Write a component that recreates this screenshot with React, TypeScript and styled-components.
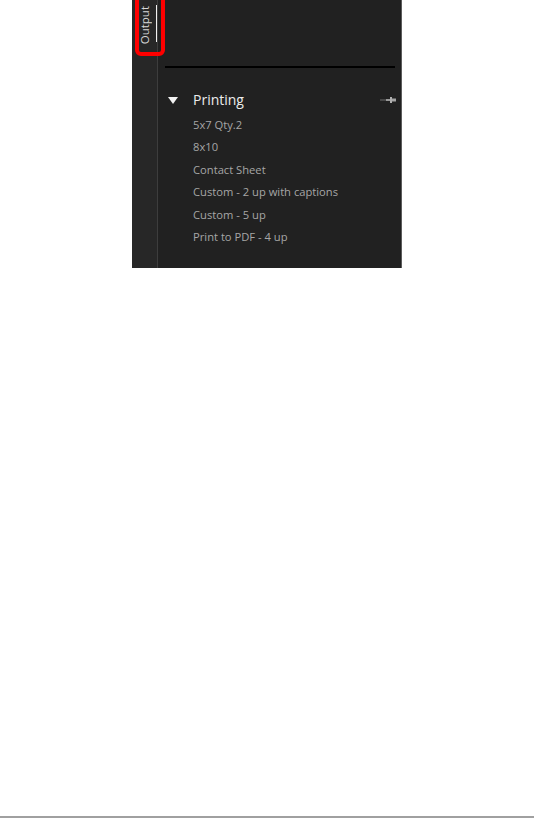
import styled, { createGlobalStyle } from 'styled-components';

const GlobalStyle = createGlobalStyle`
  html, body {
    margin: 0;
    padding: 0;
    background: #ffffff;
  }
`;

const Page = styled.div`
  height: 816px;
  border-bottom: 2px solid #a0a0a0;
  padding-left: 132px;
`;

const Panel = styled.div`
  position: relative;
  display: flex;
  width: 270px;
  height: 268px;
  background: #212121;
  border-right: 1px solid #5c5c5c;
  box-sizing: border-box;
`;

const TabStrip = styled.div`
  width: 25px;
  flex-shrink: 0;
  background: #272727;
  border-right: 1px solid #3d3d3d;
  display: flex;
  justify-content: flex-end;
  align-items: flex-start;
`;

const Tab = styled.div`
  display: flex;
  align-items: flex-start;
  gap: 4px;
  padding-top: 5px;
`;

const TabLabel = styled.span`
  writing-mode: vertical-rl;
  transform: rotate(180deg);
  font-family: 'Open Sans', 'Noto Sans', sans-serif;
  font-size: 11.5px;
  color: #d8d8d8;
  line-height: 14px;
  margin-top: 1px;
`;

const ActiveMark = styled.span`
  width: 1px;
  height: 37px;
  background: #f0f0f0;
`;

const Highlight = styled.div`
  position: absolute;
  left: 3px;
  top: -8px;
  width: 22px;
  height: 56px;
  border: 4px solid #ff0000;
  border-radius: 6px;
  pointer-events: none;
`;

const Main = styled.div`
  flex: 1;
  display: flex;
  flex-direction: column;
  padding: 66px 6px 0 7px;
`;

const Rule = styled.div`
  height: 2px;
  background: #000000;
`;

const Header = styled.div`
  display: flex;
  align-items: center;
  height: 20px;
  margin-top: 22px;
  padding-left: 3px;
`;

const Caret = styled.svg`
  width: 10px;
  height: 7px;
  margin-right: 15px;
`;

const HeaderTitle = styled.span`
  flex: 1;
  font-family: 'Open Sans', 'Noto Sans', sans-serif;
  font-size: 14px;
  color: #ececec;
  margin-top: -1px;
`;

const PinIcon = styled.svg`
  width: 16px;
  height: 8px;
  margin-right: -1px;
`;

const List = styled.ul`
  list-style: none;
  margin: 4px 0 0;
  padding: 0 0 0 28px;
`;

const Item = styled.li`
  font-family: 'Open Sans', 'Noto Sans', sans-serif;
  font-size: 11.2px;
  color: #a6a6a6;
  height: 22.4px;
  line-height: 22px;
  white-space: nowrap;
`;

const presets = [
  '5x7 Qty.2',
  '8x10',
  'Contact Sheet',
  'Custom - 2 up with captions',
  'Custom - 5 up',
  'Print to PDF - 4 up',
];

export default function App() {
  return (
    <>
      <GlobalStyle />
      <Page>
        <Panel>
          <TabStrip>
            <Tab>
              <TabLabel>Output</TabLabel>
              <ActiveMark />
            </Tab>
          </TabStrip>
          <Main>
            <Rule />
            <Header>
              <Caret viewBox="0 0 10 7">
                <polygon points="0,0 10,0 5,7" fill="#f2f2f2" />
              </Caret>
              <HeaderTitle>Printing</HeaderTitle>
              <PinIcon viewBox="0 0 16 8">
                <rect x="0" y="3.5" width="6" height="1" fill="#6e6e6e" />
                <rect x="6" y="3" width="4" height="2" fill="#9a9a9a" />
                <rect x="10" y="1" width="2" height="6" fill="#b0b0b0" />
                <rect x="12" y="2.5" width="4" height="3" fill="#a4a4a4" />
              </PinIcon>
            </Header>
            <List>
              {presets.map(p => (
                <Item key={p}>{p}</Item>
              ))}
            </List>
          </Main>
          <Highlight />
        </Panel>
      </Page>
    </>
  );
}
